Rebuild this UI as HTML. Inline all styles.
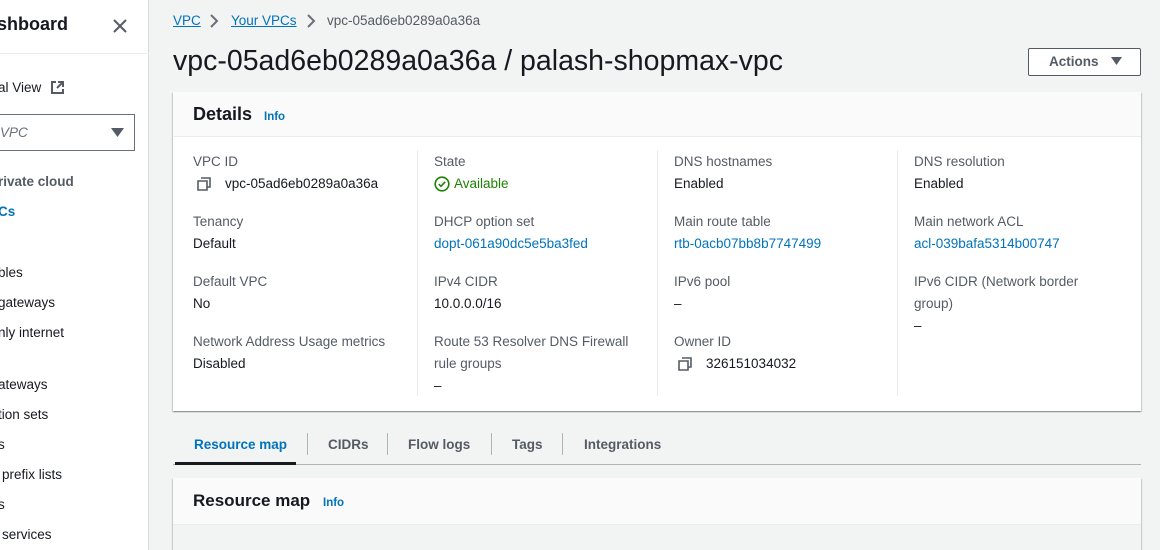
<!DOCTYPE html><html><head><style>
*{margin:0;padding:0;box-sizing:border-box}
html,body{width:1160px;height:550px;overflow:hidden}
body{background:#f2f3f3;font-family:"Liberation Sans",sans-serif;color:#16191f;position:relative;font-size:13.5px}
#w{position:absolute;left:0;top:1px;width:1160px;height:550px}
.a{position:absolute;white-space:nowrap}
.side{position:absolute;left:0;top:-1px;width:149px;height:552px;background:#fff;border-right:1px solid #d5dbdb}
.nav{color:#16191f;font-size:13.5px}
.lbl{color:#545b64}
.lnk{color:#0073bb}
.card{position:absolute;background:#fff;box-shadow:0 1px 1px 0 rgba(0,28,36,.3),1px 1px 1px 0 rgba(0,28,36,.15),-1px 1px 1px 0 rgba(0,28,36,.15)}
.vd{position:absolute;width:1px;background:#eaeded}
.tab{position:absolute;top:436px;font-weight:bold;color:#545b64;font-size:13.5px}
.ts{position:absolute;top:432px;width:1px;height:22px;background:#aab7b8}
</style></head><body><div id="w">
<div class="side">
<div class="a" style="left:-3px;top:14px;font-size:18px;font-weight:bold">shboard</div>
<svg class="a" style="left:112px;top:18px" width="16" height="16"><path d="M2 2L14 14M14 2L2 14" stroke="#545b64" stroke-width="2"/></svg>
<div class="a" style="left:0;top:53px;width:149px;height:1px;background:#eaeded"></div>
<div class="a nav" style="left:-2px;top:80px">al View</div>
<svg class="a" style="left:50px;top:80px" width="15" height="15"><path d="M6 2H2V13H13V9M8 2H13V7M13 2L7 8" stroke="#545b64" stroke-width="2" fill="none"/></svg>
<div class="a" style="left:-2px;top:114px;width:137px;height:37px;border:1px solid #687078"></div>
<div class="a" style="left:0;top:125px;font-style:italic;color:#687078">VPC</div>
<svg class="a" style="left:111px;top:128px" width="13" height="10"><path d="M0 0H13L6.5 9Z" fill="#545b64"/></svg>
<div class="a nav" style="left:-2px;top:174px;font-weight:bold;color:#545b64">rivate cloud</div>
<div class="a nav" style="left:-2px;top:204px;font-weight:bold;color:#0073bb">Cs</div>
<div class="a nav" style="left:-2px;top:265px">bles</div>
<div class="a nav" style="left:-2px;top:295px">gateways</div>
<div class="a nav" style="left:-2px;top:325px">nly internet</div>
<div class="a nav" style="left:-2px;top:377px">ateways</div>
<div class="a nav" style="left:-2px;top:407px">tion sets</div>
<div class="a nav" style="left:-2px;top:437px">s</div>
<div class="a nav" style="left:2px;top:467px">prefix lists</div>
<div class="a nav" style="left:-2px;top:497px">s</div>
<div class="a nav" style="left:2px;top:527px">services</div>
</div>
<div class="a lnk" style="left:173px;top:12px;text-decoration:underline">VPC</div>
<svg class="a" style="left:209px;top:13px" width="10" height="14"><path d="M2 1L8 7L2 13" stroke="#687078" stroke-width="2" fill="none"/></svg>
<div class="a lnk" style="left:231px;top:12px;text-decoration:underline">Your VPCs</div>
<svg class="a" style="left:306px;top:13px" width="10" height="14"><path d="M2 1L8 7L2 13" stroke="#687078" stroke-width="2" fill="none"/></svg>
<div class="a" style="left:327px;top:12px;color:#545b64">vpc-05ad6eb0289a0a36a</div>
<div class="a" style="left:173px;top:44px;font-size:28.5px">vpc-05ad6eb0289a0a36a / palash-shopmax-vpc</div>
<div class="a" style="left:1028px;top:47px;width:113px;height:28px;border:1px solid #545b64;border-radius:2px;background:#fff"></div>
<div class="a" style="left:1049px;top:53px;font-weight:bold;color:#545b64">Actions</div>
<svg class="a" style="left:1111px;top:56px" width="11" height="9"><path d="M0 0H11L5.5 8Z" fill="#545b64"/></svg>
<div class="card" style="left:173px;top:91px;width:968px;height:319px">
<div style="height:45px;background:#fafafa;border-bottom:1px solid #eaeded"></div>
</div>
<div class="a" style="left:193px;top:103px;font-size:18px;font-weight:bold">Details</div>
<div class="a lnk" style="left:264px;top:110px;font-size:11.5px;font-weight:bold">Info</div>
<div class="vd" style="left:417px;top:149px;height:246px"></div>
<div class="vd" style="left:657px;top:149px;height:246px"></div>
<div class="vd" style="left:897px;top:149px;height:246px"></div>
<svg class="a" style="left:197px;top:176px" width="15" height="15"><path d="M4 1H13V10H10M1 4H10V13H1Z" stroke="#545b64" stroke-width="1.6" fill="none"/></svg>
<div class="a lbl" style="left:193px;top:153px">VPC ID</div><div class="a" style="left:225px;top:175px">vpc-05ad6eb0289a0a36a</div>
<div class="a lbl" style="left:193px;top:213px">Tenancy</div><div class="a" style="left:193px;top:235px">Default</div>
<div class="a lbl" style="left:193px;top:273px">Default VPC</div><div class="a" style="left:193px;top:295px">No</div>
<div class="a lbl" style="left:193px;top:333px">Network Address Usage metrics</div><div class="a" style="left:193px;top:355px">Disabled</div>
<div class="a lbl" style="left:434px;top:153px">State</div>
<svg class="a" style="left:434px;top:175px" width="16" height="16"><circle cx="8" cy="8" r="6.8" stroke="#1d8102" stroke-width="1.6" fill="none"/><path d="M4.8 8.2L7 10.3L11.2 5.8" stroke="#1d8102" stroke-width="1.6" fill="none"/></svg>
<div class="a" style="left:454px;top:175px;color:#1d8102">Available</div>
<div class="a lbl" style="left:434px;top:213px">DHCP option set</div><div class="a lnk" style="left:434px;top:235px">dopt-061a90dc5e5ba3fed</div>
<div class="a lbl" style="left:434px;top:273px">IPv4 CIDR</div><div class="a" style="left:434px;top:295px">10.0.0.0/16</div>
<div class="a lbl" style="left:434px;top:333px">Route 53 Resolver DNS Firewall</div><div class="a lbl" style="left:434px;top:355px">rule groups</div><div class="a" style="left:434px;top:377px">–</div>
<div class="a lbl" style="left:674px;top:153px">DNS hostnames</div><div class="a" style="left:674px;top:175px">Enabled</div>
<div class="a lbl" style="left:674px;top:213px">Main route table</div><div class="a lnk" style="left:674px;top:235px">rtb-0acb07bb8b7747499</div>
<div class="a lbl" style="left:674px;top:273px">IPv6 pool</div><div class="a" style="left:674px;top:295px">–</div>
<div class="a lbl" style="left:674px;top:333px">Owner ID</div>
<svg class="a" style="left:678px;top:356px" width="15" height="15"><path d="M4 1H13V10H10M1 4H10V13H1Z" stroke="#545b64" stroke-width="1.6" fill="none"/></svg>
<div class="a" style="left:706px;top:355px">326151034032</div>
<div class="a lbl" style="left:914px;top:153px">DNS resolution</div><div class="a" style="left:914px;top:175px">Enabled</div>
<div class="a lbl" style="left:914px;top:213px">Main network ACL</div><div class="a lnk" style="left:914px;top:235px">acl-039bafa5314b00747</div>
<div class="a lbl" style="left:914px;top:273px">IPv6 CIDR (Network border</div><div class="a lbl" style="left:914px;top:295px">group)</div><div class="a" style="left:914px;top:317px">–</div>
<div class="tab" style="left:194px;color:#0073bb">Resource map</div>
<div class="ts" style="left:307px"></div>
<div class="tab" style="left:328px">CIDRs</div>
<div class="ts" style="left:387px"></div>
<div class="tab" style="left:408px">Flow logs</div>
<div class="ts" style="left:491px"></div>
<div class="tab" style="left:512px">Tags</div>
<div class="ts" style="left:562px"></div>
<div class="tab" style="left:584px">Integrations</div>
<div class="a" style="left:173px;top:463px;width:968px;height:1px;background:#aab7b8"></div>
<div class="a" style="left:175px;top:461px;width:121px;height:3px;background:#16191f"></div>
<div class="card" style="left:173px;top:477px;width:968px;height:80px;background:#f2f3f3">
<div style="height:47px;background:#fafafa;border-bottom:1px solid #eaeded"></div>
</div>
<div class="a" style="left:193px;top:490px;font-size:17px;font-weight:bold">Resource map</div>
<div class="a lnk" style="left:323px;top:496px;font-size:11.5px;font-weight:bold">Info</div>
</div></body></html>
